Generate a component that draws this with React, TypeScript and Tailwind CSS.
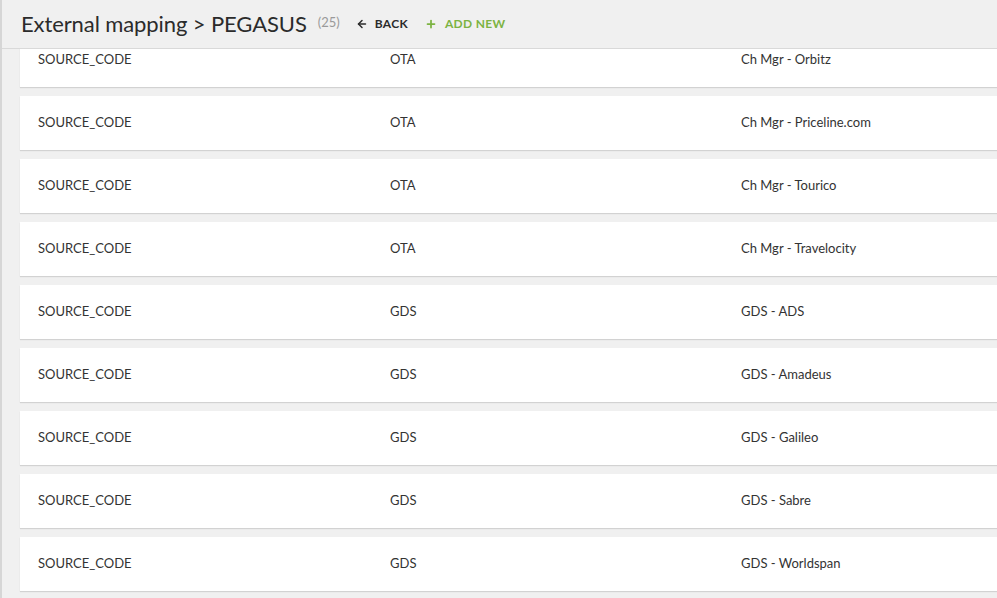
import { ArrowLeft, Plus } from "lucide-react";

const rows = [
  { field: "SOURCE_CODE", type: "OTA", value: "Ch Mgr - Orbitz" },
  { field: "SOURCE_CODE", type: "OTA", value: "Ch Mgr - Priceline.com" },
  { field: "SOURCE_CODE", type: "OTA", value: "Ch Mgr - Tourico" },
  { field: "SOURCE_CODE", type: "OTA", value: "Ch Mgr - Travelocity" },
  { field: "SOURCE_CODE", type: "GDS", value: "GDS - ADS" },
  { field: "SOURCE_CODE", type: "GDS", value: "GDS - Amadeus" },
  { field: "SOURCE_CODE", type: "GDS", value: "GDS - Galileo" },
  { field: "SOURCE_CODE", type: "GDS", value: "GDS - Sabre" },
  { field: "SOURCE_CODE", type: "GDS", value: "GDS - Worldspan" },
];

export default function App() {
  return (
    <div
      className="h-[598px] w-[997px] overflow-hidden bg-[#f0f0f0] text-[#333]"
      style={{ fontFamily: "Lato, 'Open Sans', sans-serif" }}
    >
      <div className="flex h-full border-l-2 border-[#d6d6d6]">
        <div className="flex min-w-0 flex-1 flex-col">
          {/* Header bar */}
          <div className="relative z-10 flex h-[49px] shrink-0 items-center border-b border-[#d9d9d9] bg-[#f0f0f0] pl-[19px]">
            <h1 className="text-[22px] leading-none tracking-[-0.1px] text-[#2b2b2b]">External mapping &gt; PEGASUS</h1>
            <span className="ml-[11px] mt-[-2px] text-[13px] text-[#9a9a9a]">(25)</span>
            <button className="ml-[16px] flex items-center gap-[7px] text-[12px] font-bold tracking-wide text-[#2b2b2b]">
              <ArrowLeft size={12} strokeWidth={3} />
              BACK
            </button>
            <button className="ml-[17px] flex items-center gap-[8px] text-[12px] font-bold tracking-[0.3px] text-[#7cb342]">
              <Plus size={12} strokeWidth={3.5} />
              ADD NEW
            </button>
          </div>

          {/* Mapping list */}
          <div className="flex-1 overflow-hidden">
            <div className="mt-[-16px] flex flex-col gap-[9px] pl-[18px]">
              {rows.map((r, i) => (
                <div
                  key={i}
                  className="grid h-[54px] shrink-0 grid-cols-[352px_351px_1fr] items-center bg-white pl-[18px] text-[13px] shadow-[0_1px_1px_rgba(0,0,0,0.12)]"
                >
                  <span>{r.field}</span>
                  <span>{r.type}</span>
                  <span>{r.value}</span>
                </div>
              ))}
            </div>
          </div>
        </div>
      </div>
    </div>
  );
}
